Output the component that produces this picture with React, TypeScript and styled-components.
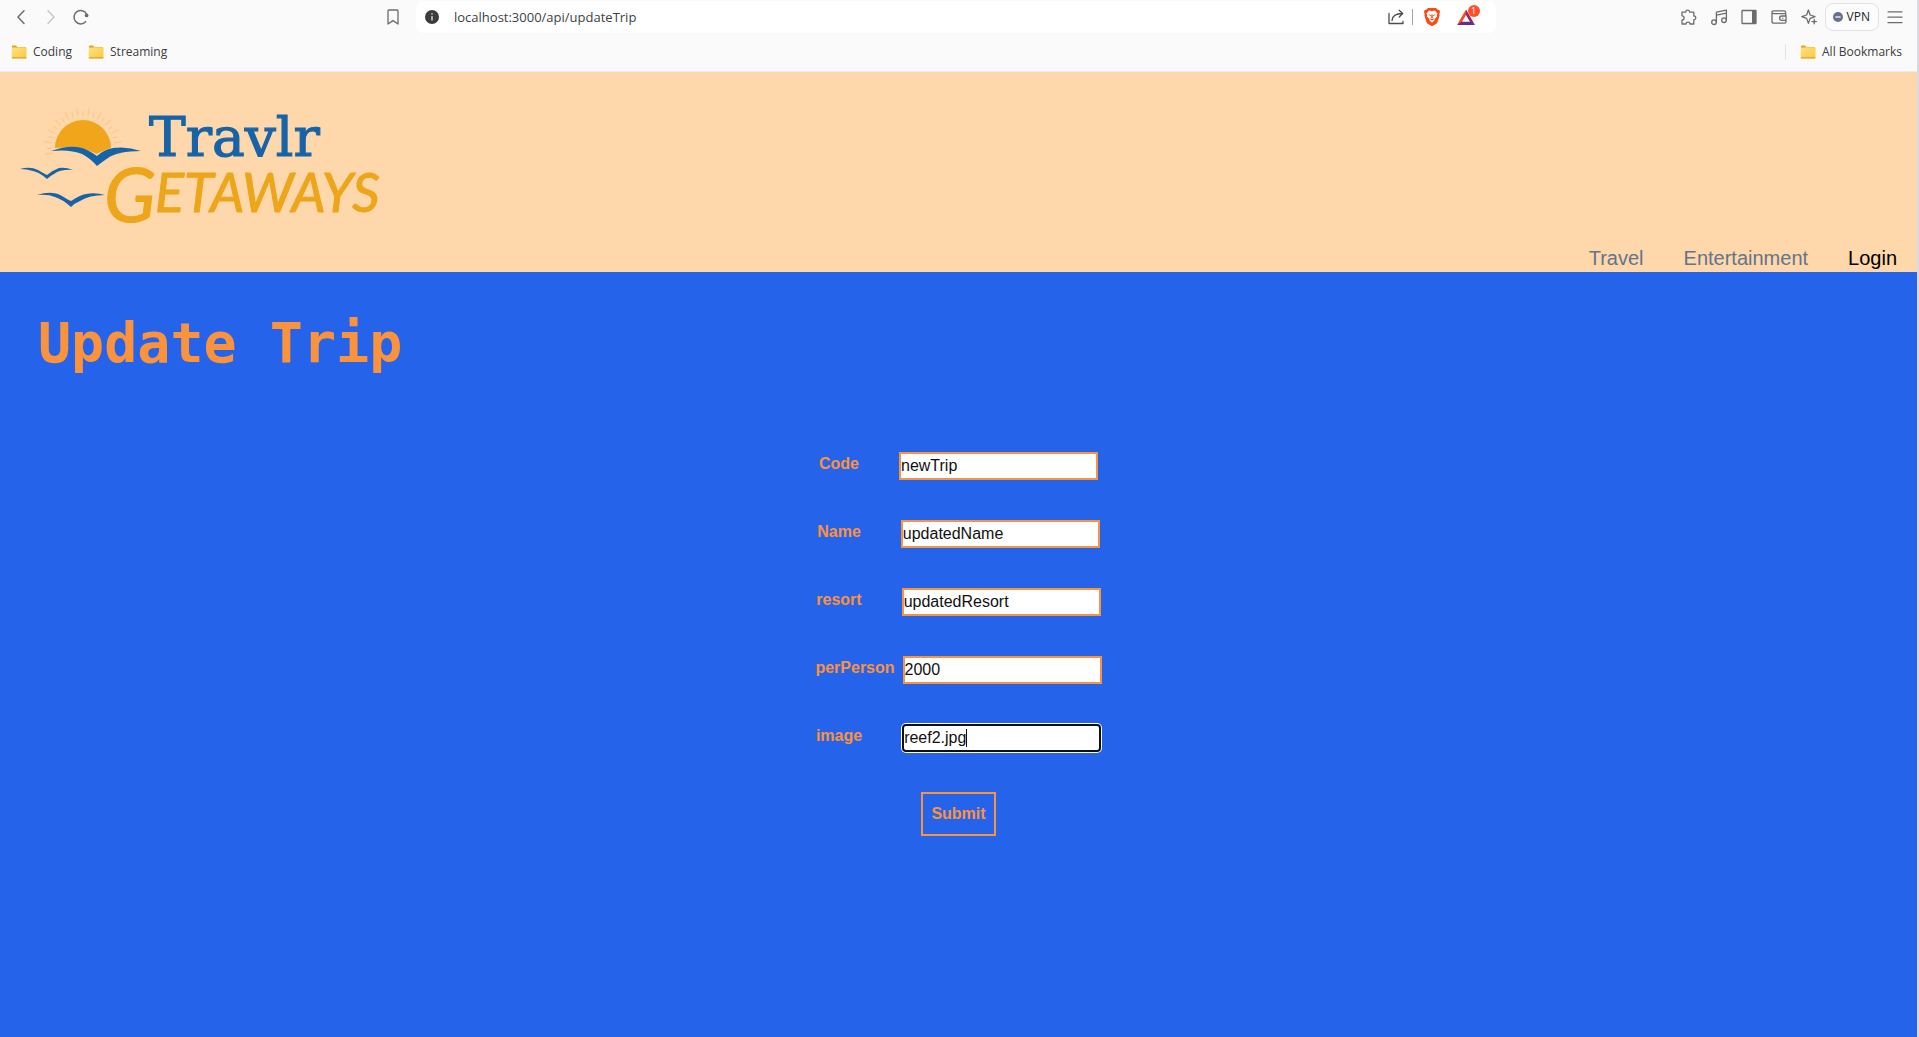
import React from 'react';
import styled, { createGlobalStyle } from 'styled-components';

const GlobalStyle = createGlobalStyle`
  *, *::before, *::after { box-sizing: border-box; }
  body { margin: 0; }
  button, input { font: inherit; }
`;

const UI_FONT = '"Open Sans", "Noto Sans", sans-serif';

const Window = styled.div`
  display: flex;
  flex-direction: column;
  min-height: 100vh;
  border-right: 2px solid #d9dae0;
  font-family: "Liberation Sans", Arial, sans-serif;
  font-size: 16px;
  line-height: 24px;
`;

/* ---------- browser chrome ---------- */

const Chrome = styled.div`
  background: #fafafa;
  border-bottom: 1px solid #ebecf3;
  color: #3b3b40;
  font-family: ${UI_FONT};
  font-size: 12px;
  line-height: 16px;
`;

const Toolbar = styled.div`
  display: flex;
  align-items: center;
  height: 34px;
  padding: 0 12px 0 11px;
`;

const IconGroup = styled.div<{ $gap: number }>`
  display: flex;
  align-items: center;
  gap: ${(p) => p.$gap}px;
`;

const IconButton = styled.button<{ $tone?: string }>`
  display: flex;
  padding: 0;
  border: 0;
  background: none;
  color: ${(p) => p.$tone ?? '#6c6c70'};
`;

const Location = styled.div`
  flex: 1;
  display: flex;
  align-items: center;
  gap: 13px;
  margin: 0 183px 0 292px;
`;

const AddressBar = styled.div`
  flex: 1;
  display: flex;
  align-items: center;
  height: 32px;
  padding: 0 16px 0 6px;
  border-radius: 8px;
  background: #fff;
`;

const Address = styled.input`
  flex: 1;
  min-width: 0;
  margin: 0 12px;
  padding: 0;
  border: 0;
  outline: 0;
  background: none;
  color: #3b3f45;
  font-size: 13px;
`;

const Divider = styled.span<{ $tone: string; $gap: number }>`
  width: 1px;
  height: 16px;
  margin: 0 ${(p) => p.$gap}px 0 6px;
  background: ${(p) => p.$tone};
`;

const Rewards = styled(IconButton)`
  position: relative;
  margin-left: 14px;
`;

const Badge = styled.span`
  position: absolute;
  top: -2px;
  right: 0;
  width: 12px;
  height: 12px;
  border-radius: 6px;
  background: #ff5029;
  color: #fff;
  font-size: 9px;
  line-height: 12px;
  text-align: center;
`;

const VpnButton = styled.button`
  display: flex;
  align-items: center;
  gap: 4px;
  height: 28px;
  margin: 0 6px;
  padding: 0 8px 0 7px;
  border: 1px solid #e2e2e6;
  border-radius: 8px;
  background: #fcfcfc;
  color: #24242a;
`;

const Bookmarks = styled.nav`
  display: flex;
  align-items: center;
  gap: 16px;
  height: 37px;
  padding: 0 15px 2px 11px;
`;

const Bookmark = styled.a`
  display: flex;
  align-items: center;
  gap: 6px;
  color: inherit;
  font-size: 12px;
  text-decoration: none;
`;

const AllBookmarks = styled.div`
  display: flex;
  align-items: center;
  margin-left: auto;
`;

/* ---------- page ---------- */

const SiteHeader = styled.header`
  display: flex;
  justify-content: space-between;
  height: 200px;
  background: #fed7aa;
`;

const SiteNav = styled.nav`
  display: flex;
  align-self: flex-end;
  gap: 40px;
  padding-right: 20px;
  font-size: 20px;
  line-height: 28px;
`;

const NavLink = styled.a<{ $active?: boolean }>`
  color: ${(p) => (p.$active ? '#000' : '#64748b')};
  text-decoration: none;
`;

const Main = styled.main`
  flex: 1;
  padding: 40px 38px;
  background: #2563eb;
  color: #fb923c;
`;

const Title = styled.h1`
  margin: 0 0 78px;
  font-family: "DejaVu Sans Mono", monospace;
  font-size: 55px;
  font-weight: 700;
  line-height: 62px;
`;

const TripForm = styled.form`
  display: flex;
  flex-direction: column;
  align-items: center;
  gap: 40px;
`;

const Field = styled.div<{ $gap: number }>`
  display: flex;
  gap: ${(p) => p.$gap}px;
`;

const Label = styled.label`
  font-weight: 700;
`;

const InputWrap = styled.div`
  position: relative;
`;

const TextBox = styled.input`
  display: block;
  width: 199px;
  height: 28px;
  padding: 0;
  border: 2px solid #fb923c;
  outline: 0;
  background: #fff;
  color: #111;
  caret-color: transparent;

  &:focus {
    border-color: #101010;
    border-radius: 4px;
    box-shadow: 0 0 0 1px #fff;
  }
`;

/* Repeats the typed text invisibly so that the caret sits at its end. */
const Caret = styled.span`
  position: absolute;
  top: 5px;
  left: 2px;
  height: 18px;
  border-right: 1px solid #111;
  color: transparent;
  line-height: 18px;
  pointer-events: none;

  &::before {
    content: attr(data-text);
  }
`;

const Submit = styled.button`
  padding: 8px;
  border: 2px solid #fb923c;
  background: none;
  color: inherit;
  font-weight: 700;
`;

/* ---------- drawings ---------- */

function Icon({ children, size = 20, width = 1.3 }: { children: React.ReactNode; size?: number; width?: number }) {
  return (
    <svg width={size} height={size} viewBox="0 0 20 20" fill="none" stroke="currentColor"
      strokeWidth={width} strokeLinecap="round" strokeLinejoin="round" aria-hidden="true">
      {children}
    </svg>
  );
}

const FolderIcon = () => (
  <svg width="16" height="14" viewBox="0 0 16 14" aria-hidden="true">
    <defs>
      <linearGradient id="folder" x1="0" y1="0" x2="1" y2="1">
        <stop offset="0" stopColor="#ffe282" />
        <stop offset="1" stopColor="#fbc83a" />
      </linearGradient>
    </defs>
    <path d="M1 1.4Q1 .6 1.8.6H5L6.4 2.2H14.4Q15.2 2.2 15.2 3V5H1Z" fill="#e3a21a" />
    <rect x=".7" y="2.4" width="14.8" height="11" rx="1" fill="url(#folder)" />
    <path d="M.9 12.9H15.3" stroke="#c99425" strokeWidth=".9" />
  </svg>
);

const BraveIcon = () => (
  <svg width="20" height="20" viewBox="0 0 20 20" aria-hidden="true">
    <path d="M6 1H14L15.8 2.8L17.4 3L18 5L17.4 7L17.6 8.5L15.6 15Q15.2 16.1 14 17L10 19.2L6 17Q4.8 16.1 4.4 15L2.4 8.5L2.6 7L2 5L2.6 3L4.2 2.8Z" fill="#fb4b12" />
    <path d="M7 3.6L10 4.2L13 3.6L15.4 6.4L14.8 8.6L15.2 9.6L12.4 12L12.8 13L10 15.8L7.2 13L7.6 12L4.8 9.6L5.2 8.6L4.6 6.4Z" fill="#fff" />
    <path d="M6.4 7.2L9 8L8.5 9.2ZM13.6 7.2L11 8L11.5 9.2ZM9.4 7.6H10.6L10.9 10.8L10 11.6L9.1 10.8ZM7.8 11.2L10 12.2L12.2 11.2L11.6 12.6L10 13.4L8.4 12.6Z" fill="#fb4b12" />
  </svg>
);

const RewardsIcon = () => (
  <svg width="24" height="20" viewBox="0 0 24 20" aria-hidden="true">
    <path d="M10 2.5L1 18L5.6 15.4L10 8Z" fill="#ff4724" />
    <path d="M10 2.5V8L14.4 15.4L19 18Z" fill="#9e1f63" />
    <path d="M1 18L5.6 14.8H14.4L19 18Z" fill="#662d91" />
  </svg>
);

const rays = Array.from({ length: 23 }, (_, i) => {
  const a = Math.PI * (1.06 - (i * 1.12) / 22);
  const end = i % 2 ? 36 : 39;
  return `M${83 + 31 * Math.cos(a)} ${75 - 31 * Math.sin(a)}L${83 + end * Math.cos(a)} ${75 - end * Math.sin(a)}`;
}).join('');

const Logo = () => (
  <svg width="400" height="200" viewBox="0 0 400 200" role="img" aria-label="Travlr Getaways">
    <path d={rays} stroke="#fbc98a" strokeWidth="1.3" />
    <path d="M55 76A28 28 0 1 1 111 76L97 81L83 77L69 75Z" fill="#f0a51b" />
    <path d="M80 75H111Q101 79 97 82Z" fill="#f0a51b" />
    <g fill="#1763a8">
      <path d="M51 79Q73 71 87 78Q93 81 97 84Q103 78 113 76Q127 74 141 79Q118 79 108 86Q102 90 97 94Q90 86 82 82Q70 77 51 79Z" />
      <path d="M20 97Q30 94 38 98Q43 101 47 103Q53 98 59 96Q66 95 73 98Q61 97 54 102Q50 104 47 107Q39 100 33 99Q27 97 20 97Z" />
      <path d="M37 123Q52 118 62 124Q68 128 71 129Q80 123 86 122Q95 120 105 123Q89 123 80 129Q75 131 71 135Q62 127 55 125Q48 122 37 123Z" />
    </g>
    <text x="149" y="84" fill="#1763a8" stroke="#1763a8" strokeWidth="1.2" fontFamily='"DejaVu Serif", serif' fontSize="55">Travlr</text>
    <g fill="#eda51a" stroke="#eda51a" strokeWidth="1" strokeLinejoin="round" fontFamily="Lato, sans-serif" fontStyle="italic">
      <text x="104" y="150" fontSize="76">G</text>
      <text x="155" y="140" fontSize="54">ETAWAYS</text>
    </g>
  </svg>
);

const fields = [
  { id: 'code', label: 'Code', value: 'newTrip' },
  { id: 'name', label: 'Name', value: 'updatedName' },
  { id: 'resort', label: 'resort', value: 'updatedResort' },
  { id: 'perPerson', label: 'perPerson', value: '2000', gap: 8 },
  { id: 'image', label: 'image', value: 'reef2.jpg', focused: true },
];

function TripField({ id, label, value, gap = 40, focused = false }: (typeof fields)[number]) {
  const [text, setText] = React.useState(value);
  const [active, setActive] = React.useState(focused);
  return (
    <Field $gap={gap}>
      <Label htmlFor={id}>{label}</Label>
      <InputWrap>
        <TextBox
          id={id}
          value={text}
          autoFocus={focused}
          onChange={(e) => setText(e.target.value)}
          onFocus={() => setActive(true)}
          onBlur={() => setActive(false)}
        />
        {active && <Caret data-text={text} aria-hidden="true" />}
      </InputWrap>
    </Field>
  );
}

function BrowserChrome() {
  return (
    <Chrome>
      <Toolbar>
        <IconGroup $gap={10}>
          <IconButton aria-label="Back"><Icon width={1.5}><path d="M13 3.8L7 10L13 16.4" /></Icon></IconButton>
          <IconButton aria-label="Forward" $tone="#c6c6c8"><Icon width={1.5}><path d="M7 3.8L13 10L7 16.4" /></Icon></IconButton>
          <IconButton aria-label="Reload">
            <Icon width={1.5}>
              <path d="M15.6 7A6.7 6.7 0 1 0 14.6 14.8" />
              <circle cx="15.6" cy="8.4" r="1.9" fill="currentColor" stroke="none" />
            </Icon>
          </IconButton>
        </IconGroup>
        <Location>
          <IconButton aria-label="Bookmark this page">
            <Icon><path d="M5 4Q5 3 6 3H14Q15 3 15 4V17L10 13.6L5 17Z" /></Icon>
          </IconButton>
          <AddressBar>
            <IconButton aria-label="Site information">
              <Icon>
                <circle cx="10" cy="10" r="7" fill="#3c3c3e" stroke="none" />
                <path d="M10 9.6V13M10 6.8V7" stroke="#d4d4d6" strokeWidth="1.5" />
              </Icon>
            </IconButton>
            <Address aria-label="Address" defaultValue="localhost:3000/api/updateTrip" />
            <IconButton aria-label="Share" $tone="#4c4c50">
              <Icon>
                <path d="M3 6.5V16.5H17V14.5M6 13.5Q6.5 6.5 16.5 6.5M13.2 3.2L16.7 6.5L13.2 10" />
              </Icon>
            </IconButton>
            <Divider $tone="#a3a3ab" $gap={9} />
            <IconButton aria-label="Shields"><BraveIcon /></IconButton>
            <Rewards aria-label="Rewards"><RewardsIcon /><Badge>1</Badge></Rewards>
          </AddressBar>
        </Location>
        <IconGroup $gap={10}>
          <IconButton aria-label="Extensions">
            <Icon><path d="M3 5.2H6.8C6.2 2.4 11 2.4 10.6 5.2H14.8V9C17.4 8.6 17.4 13 14.8 12.6V17H11C11.2 14.4 6.8 14.4 7 17H3V13C5.8 13 5.8 8.8 3 8.8Z" /></Icon>
          </IconButton>
          <IconButton aria-label="Media">
            <Icon><path d="M7.4 15V5.2L17.4 3.2V13M7.4 8.2L17.4 6.2" /><circle cx="5" cy="15.2" r="2.3" /><circle cx="15" cy="13.2" r="2.3" /></Icon>
          </IconButton>
          <IconButton aria-label="Sidebar">
            <Icon><rect x="3" y="3.5" width="14" height="13" rx=".5" /><rect x="13" y="3.5" width="4" height="13" fill="currentColor" stroke="none" /></Icon>
          </IconButton>
          <IconButton aria-label="Wallet">
            <Icon><path d="M16.6 6.6V5.2Q16.6 3.8 15.2 3.8H4.6Q3 3.8 3 5.2Q3 6.6 4.6 6.6H15.6Q17 6.6 17 8V14.8Q17 16.2 15.6 16.2H4.6Q3 16.2 3 14.8V5.2M17 9H12.8Q10.6 9 10.6 11.2Q10.6 13.3 12.8 13.3H17M13.6 11.2H13.8" /></Icon>
          </IconButton>
          <IconButton aria-label="Assistant">
            <Icon><path d="M9.4 3L11.2 8L16 9.6L11.2 11.4L9.4 16.4L7.6 11.4L2.8 9.6L7.6 8Z" /><path d="M15.2 12.4V16.8M13 14.6H17.4" /></Icon>
          </IconButton>
        </IconGroup>
        <VpnButton>
          <svg width="10" height="10" viewBox="0 0 10 10" aria-hidden="true">
            <circle cx="5" cy="5" r="5" fill="#68708f" /><path d="M2.4 5H7.6" stroke="#e4e6ef" strokeWidth="1.5" />
          </svg>
          VPN
        </VpnButton>
        <IconButton aria-label="Menu"><Icon><path d="M3 4.8H17M3 10.2H17M3 15.6H17" /></Icon></IconButton>
      </Toolbar>
      <Bookmarks aria-label="Bookmarks">
        <Bookmark href="#coding"><FolderIcon />Coding</Bookmark>
        <Bookmark href="#streaming"><FolderIcon />Streaming</Bookmark>
        <AllBookmarks>
          <Divider $tone="#e4e4ee" $gap={14} />
          <Bookmark href="#bookmarks"><FolderIcon />All Bookmarks</Bookmark>
        </AllBookmarks>
      </Bookmarks>
    </Chrome>
  );
}

export default function App() {
  return (
    <Window>
      <GlobalStyle />
      <BrowserChrome />
      <SiteHeader>
        <Logo />
        <SiteNav>
          <NavLink href="#travel">Travel</NavLink>
          <NavLink href="#entertainment">Entertainment</NavLink>
          <NavLink href="#login" $active>Login</NavLink>
        </SiteNav>
      </SiteHeader>
      <Main>
        <Title>Update Trip</Title>
        <TripForm onSubmit={(e) => e.preventDefault()}>
          {fields.map((f) => <TripField key={f.id} {...f} />)}
          <Submit type="submit">Submit</Submit>
        </TripForm>
      </Main>
    </Window>
  );
}
